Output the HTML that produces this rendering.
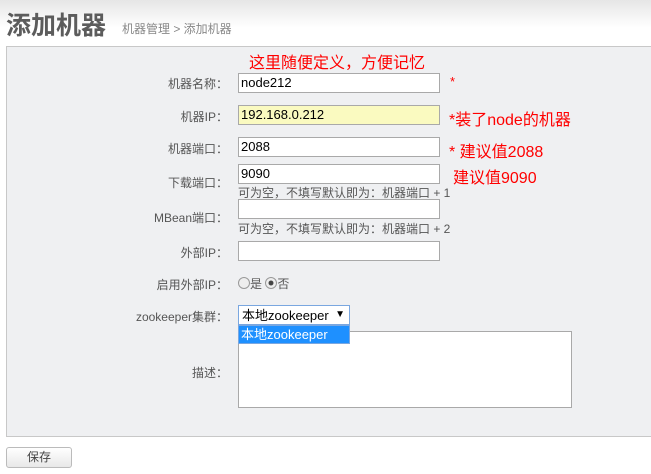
<!DOCTYPE html><html><head><meta charset="utf-8"><style>
body{margin:0;width:651px;height:474px;background:#fff;font-family:"Liberation Sans","Noto Sans CJK SC",sans-serif;position:relative;overflow:hidden}
.a{position:absolute;white-space:nowrap}
.hdr{position:absolute;left:0;top:0;width:651px;height:46px;background:linear-gradient(#e6e6e6,#fff 60%)}
.panel{position:absolute;left:6px;top:46px;width:650px;height:389px;background:#eff0f2;border:1px solid #c8c8c8;border-right:none}
.lbl{position:absolute;right:420px;font-size:12px;color:#555;text-align:right;padding-right:3px}
.in{position:absolute;left:238px;width:198px;height:18px;border:1px solid #a9a9a9;background:#fff;font-size:13px;line-height:18px;padding-left:2px;box-sizing:content-box;color:#000}
.red{position:absolute;color:#f00;font-size:16px}
.hint{position:absolute;left:238px;font-size:12px;color:#555}
</style></head><body>
<div class="hdr"></div>
<div class="a" style="left:6px;top:6px;font-size:25px;font-weight:bold;color:#5c5c5c">添加机器</div>
<div class="a" style="left:122px;top:20px;font-size:12px;color:#888">机器管理 &gt; 添加机器</div>
<div class="panel"></div>
<div class="red a" style="left:249px;top:49px">这里随便定义，方便记忆</div>
<div class="lbl a" style="top:75px">机器名称：</div><div class="in" style="top:73px">node212</div><div class="red a" style="left:450px;top:74px;font-size:13px">*</div>
<div class="lbl a" style="top:108px">机器IP：</div><div class="in" style="top:105px;background:#fafac0">192.168.0.212</div><div class="red a" style="left:449px;top:106px">*装了node的机器</div>
<div class="lbl a" style="top:140px">机器端口：</div><div class="in" style="top:137px">2088</div><div class="red a" style="left:449px;top:138px">* 建议值2088</div>
<div class="lbl a" style="top:174px">下载端口：</div><div class="in" style="top:164px">9090</div><div class="red a" style="left:453px;top:164px">建议值9090</div>
<div class="hint a" style="top:184px">可为空，不填写默认即为：机器端口 + 1</div>
<div class="lbl a" style="top:209px">MBean端口：</div><div class="in" style="top:199px"></div>
<div class="hint a" style="top:220px">可为空，不填写默认即为：机器端口 + 2</div>
<div class="lbl a" style="top:244px">外部IP：</div><div class="in" style="top:241px"></div>
<div class="lbl a" style="top:276px">启用外部IP：</div>
<div class="a" style="left:238px;top:275px;font-size:12px;color:#555"><span style="display:inline-block;width:10px;height:10px;border:1px solid #999;border-radius:50%;background:#eee;vertical-align:-1px"></span>是 <span style="display:inline-block;width:10px;height:10px;border:1px solid #999;border-radius:50%;background:radial-gradient(#444 30%,#eee 40%);vertical-align:-1px"></span>否</div>
<div class="lbl a" style="top:308px">zookeeper集群：</div>
<div class="a" style="left:238px;top:305px;width:107px;height:18px;border:1px solid #7aa7e0;background:#fff;font-size:13px;line-height:19px;padding-left:3px;box-sizing:content-box">本地zookeeper<span style="position:absolute;right:4px;top:-1px;font-size:10px">▼</span></div>
<div class="a" style="left:238px;top:331px;width:332px;height:75px;border:1px solid #a9a9a9;background:#fff"></div>
<div class="a" style="left:238px;top:325px;width:108px;height:17px;background:#1e90ff;border:1px solid #7aa7e0;color:#fff;font-size:13px;line-height:17px;padding-left:2px;box-sizing:content-box">本地zookeeper</div>
<div class="lbl a" style="top:364px">描述：</div>
<div class="a" style="left:6px;top:447px;width:64px;height:19px;border:1px solid #bbb;border-radius:3px;background:linear-gradient(#fff,#e8e8e8);font-size:12px;color:#444;text-align:center;line-height:19px">保存</div>
</body></html>
